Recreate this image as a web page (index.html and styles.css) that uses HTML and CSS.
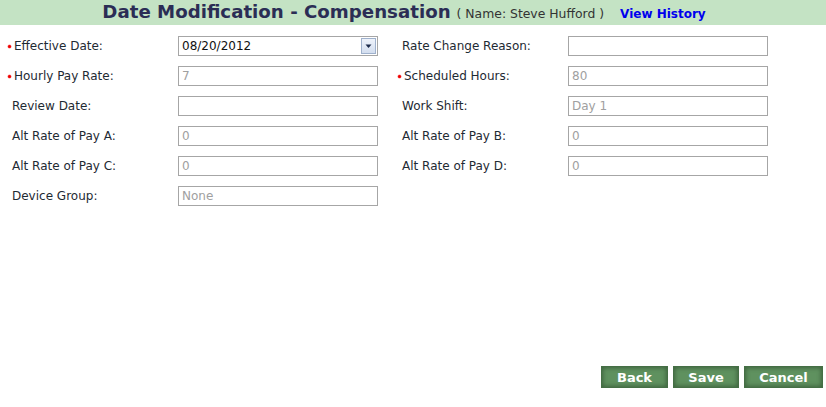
FILE: index.html
```html
<!DOCTYPE html>
<html>
<head>
<meta charset="utf-8">
<link rel="stylesheet" href="styles.css">
</head>
<body>
<div class="page">
  <div class="header">
    <span class="title">Date Modification - Compensation</span>
    <span class="name">( Name: Steve Hufford )</span>
    <a class="history" href="#">View History</a>
  </div>
  <div class="form">
    <label class="lbl req"><span class="dot"></span>Effective Date:</label>
    <div class="field date"><span class="val dark">08/20/2012</span><span class="dd"><svg width="9" height="6" viewBox="0 0 9 6"><path d="M1.5 1.5h6L4.5 5z" fill="#1c2a4a"/></svg></span></div>
    <span></span>
    <label class="lbl">Rate Change Reason:</label>
    <div class="field"></div>

    <label class="lbl req"><span class="dot"></span>Hourly Pay Rate:</label>
    <div class="field"><span class="val">7</span></div>
    <span></span>
    <label class="lbl req"><span class="dot"></span>Scheduled Hours:</label>
    <div class="field"><span class="val">80</span></div>

    <label class="lbl">Review Date:</label>
    <div class="field"></div>
    <span></span>
    <label class="lbl">Work Shift:</label>
    <div class="field"><span class="val">Day 1</span></div>

    <label class="lbl">Alt Rate of Pay A:</label>
    <div class="field"><span class="val">0</span></div>
    <span></span>
    <label class="lbl">Alt Rate of Pay B:</label>
    <div class="field"><span class="val">0</span></div>

    <label class="lbl">Alt Rate of Pay C:</label>
    <div class="field"><span class="val">0</span></div>
    <span></span>
    <label class="lbl">Alt Rate of Pay D:</label>
    <div class="field"><span class="val">0</span></div>

    <label class="lbl">Device Group:</label>
    <div class="field"><span class="val">None</span></div>
  </div>
  <div class="footer">
    <button class="btn back">Back</button>
    <button class="btn save">Save</button>
    <button class="btn cancel">Cancel</button>
  </div>
</div>
</body>
</html>
```

FILE: styles.css
```css
html, body {
  margin: 0;
  padding: 0;
  background: #ffffff;
}
body {
  font-family: "DejaVu Sans", Verdana, sans-serif;
  font-size: 12px;
  color: #1e2a33;
}
.page {
  height: 407px;
  display: flex;
  flex-direction: column;
}
.header {
  height: 25px;
  background: #c4e3c4;
  display: flex;
  align-items: baseline;
  justify-content: center;
  padding-right: 18px;
  box-sizing: border-box;
}
.title {
  font-size: 18.2px;
  font-weight: bold;
  color: #2b2d55;
  line-height: 24px;
}
.name {
  font-size: 12.4px;
  color: #333;
  margin-left: 6px;
}
.history {
  font-size: 12px;
  font-weight: bold;
  color: #0000ee;
  text-decoration: none;
  margin-left: 16px;
}
.form {
  display: grid;
  grid-template-columns: 166px 200px 24px 166px 200px;
  grid-auto-rows: 30px;
  padding: 6px 0 0 12px;
  align-items: center;
}
.lbl {
  display: flex;
  align-items: center;
  white-space: nowrap;
}
.lbl.req {
  margin-left: -4px;
}
.dot {
  display: inline-block;
  width: 3px;
  height: 3px;
  border-radius: 50%;
  background: #f00000;
  box-shadow: 0 0 0 0.5px rgba(240, 0, 0, 0.5);
  margin-right: 3px;
  margin-top: 1px;
}
.field {
  height: 20px;
  border: 1px solid #a6a6a6;
  box-sizing: border-box;
  display: flex;
  align-items: center;
  padding-left: 3px;
  position: relative;
}
.val {
  color: #a0a0a0;
}
.val.dark {
  color: #111;
}
.dd {
  position: absolute;
  right: 1px;
  top: 1px;
  width: 15px;
  height: 16px;
  box-sizing: border-box;
  border: 1px solid #9fb1cc;
  background: linear-gradient(#eef3fb, #d3deef);
  display: flex;
  align-items: center;
  justify-content: center;
}
.dd svg { display: block; }
.footer {
  margin-top: auto;
  display: flex;
  justify-content: flex-end;
  gap: 5px;
  padding: 0 3px 19px 0;
}
.btn {
  height: 22px;
  border: 1px solid #456f45;
  background: #5f915f;
  box-shadow: inset 0 0 4px 1px #3e643e;
  color: #ffffff;
  font-family: "DejaVu Sans", Verdana, sans-serif;
  font-weight: bold;
  font-size: 13px;
  padding: 0;
  cursor: pointer;
}
.back { width: 67px; }
.save { width: 66px; }
.cancel { width: 79px; }
```
